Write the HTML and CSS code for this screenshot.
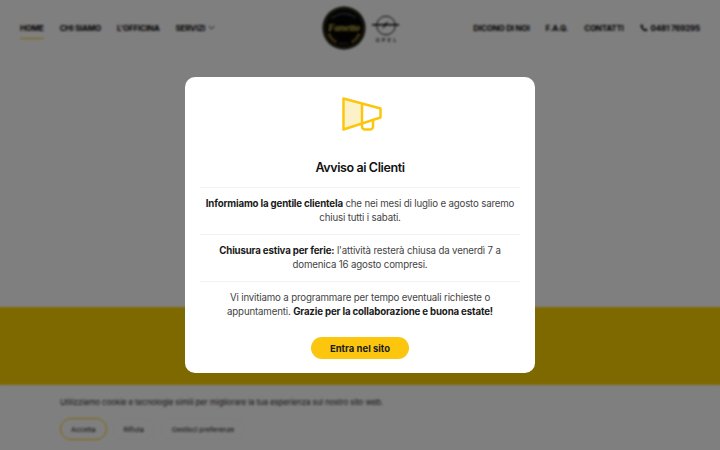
FILE: index.html
```html
<!DOCTYPE html>
<html lang="it">
<head>
    <meta charset="UTF-8">
    <title>Officina Opel</title>
    <link rel="stylesheet" href="styles.css">
</head>
<body>
    <div class="page">
        <!-- Header -->
        <header class="site-header">
            <nav class="nav-group">
                <a class="nav-link active" href="#">HOME</a>
                <a class="nav-link" href="#">CHI SIAMO</a>
                <a class="nav-link" href="#">L'OFFICINA</a>
                <a class="nav-link" href="#">SERVIZI
                    <svg class="chevron" viewBox="0 0 10 6" width="7" height="5"><path d="M1 1l4 4 4-4" fill="none" stroke="#000" stroke-width="1.2"/></svg>
                </a>
            </nav>
            <div class="logos">
                <svg class="logo-badge" viewBox="0 0 44 44" width="44" height="44">
                    <circle cx="22" cy="22" r="21.500" fill="#050505"/>
                    <circle cx="22" cy="22" r="19.500" fill="none" stroke="#8c7a30" stroke-width=".6"/>
                    <text x="22" y="25" text-anchor="middle" class="badge-text">Fanetto</text>
                    <path d="M7 28q2 5 7 8M37 28q-2 5-7 8" fill="none" stroke="#b59a2a" stroke-width="2.400" stroke-dasharray="2 1"/>
                    <path d="M10 12q12-9 24 0" fill="none" stroke="#888" stroke-width="1.400" stroke-dasharray="1 1"/>
                    <path d="M17 37.500h10" stroke="#777" stroke-width="1" stroke-dasharray="1 1"/>
                </svg>
                <div class="opel">
                    <svg viewBox="0 0 30 24" width="28" height="23">
                        <circle cx="15" cy="12" r="10" fill="none" stroke="#000" stroke-width="1"/>
                        <path d="M0 10.500h13l5-3-2.500 3H29v1.600H15l-4.500 4 2.500-4H0z" fill="#000"/>
                    </svg>
                    <span class="opel-text">OPEL</span>
                </div>
            </div>
            <nav class="nav-group">
                <a class="nav-link" href="#">DICONO DI NOI</a>
                <a class="nav-link" href="#">F.A.Q.</a>
                <a class="nav-link" href="#">CONTATTI</a>
                <a class="nav-link phone" href="#">
                    <svg viewBox="0 0 24 24" width="8" height="8"><path d="M6 1l4 5-2.500 3c1 3 4 6 7 7l3-2.500 5 4-3 4.500C10 22 2 13 1.500 4z" fill="#000"/></svg>
                    0481 769295
                </a>
            </nav>
        </header>

        <section class="hero"></section>
        <section class="band"></section>

        <!-- Cookie bar -->
        <section class="cookie-bar">
            <p>Utilizziamo cookie e tecnologie simili per migliorare la tua esperienza sul nostro sito web.</p>
            <div class="cookie-actions">
                <button class="cookie-btn accept">Accetta</button>
                <button class="cookie-btn">Rifiuta</button>
                <button class="cookie-btn">Gestisci preferenze</button>
            </div>
        </section>
    </div>

    <!-- Popup -->
    <div class="overlay">
        <div class="modal">
            <svg class="modal-icon" viewBox="0 0 40 34" width="40" height="34">
                <path d="M1.500 1.500L20 6.500v21L1.500 32.500z" fill="#fdf1c7"/>
                <path d="M1.500 1.500L38.500 11.500v9L1.500 32.500zM20 6.500v21M20 27v2.500a3 3 0 0 0 3 3h5a3 3 0 0 0 3-3V23" fill="none" stroke="#fcc60e" stroke-width="2.500" stroke-linejoin="round"/>
            </svg>
            <h2>Avviso ai Clienti</h2>
            <div class="modal-text">
                <p><strong>Informiamo la gentile clientela</strong> che nei mesi di luglio e agosto saremo chiusi tutti i sabati.</p>
                <p><strong>Chiusura estiva per ferie:</strong> l'attività resterà chiusa da venerdì 7 a domenica 16 agosto compresi.</p>
                <p>Vi invitiamo a programmare per tempo eventuali richieste o appuntamenti. <strong>Grazie per la collaborazione e buona estate!</strong></p>
            </div>
            <button class="enter-btn">Entra nel sito</button>
        </div>
    </div>
</body>
</html>
```

FILE: styles.css
```css
* {
    margin: 0;
    padding: 0;
    box-sizing: border-box;
    font-family: "Inter", "Liberation Sans", sans-serif;
}

html, body {
    height: 100%;
    overflow: hidden;
}

.page {
    height: 100vh;
    display: flex;
    flex-direction: column;
    background: #fff;
}

/* Header */
.site-header {
    height: 56px;
    padding: 0 20px;
    display: flex;
    align-items: center;
    justify-content: space-between;
}

.nav-group {
    display: flex;
    gap: 16px;
    width: 240px;
}

.nav-group:last-child {
    justify-content: flex-end;
}

.nav-link {
    color: #000;
    font-size: 8px;
    font-weight: 700;
    letter-spacing: -0.2px;
    text-decoration: none;
    white-space: nowrap;
    padding: 5px 0;
    display: flex;
    align-items: center;
    gap: 3px;
    border-bottom: 1px solid transparent;
}

.nav-link.active {
    border-bottom-color: #fcc60e;
}

.logos {
    display: flex;
    align-items: center;
    gap: 6px;
    margin-left: 2px;
}

.badge-text {
    font-size: 10px;
    font-style: italic;
    font-weight: 700;
    fill: #d8c04a;
    font-family: "Liberation Serif", serif;
}

.opel {
    display: flex;
    flex-direction: column;
    align-items: center;
}

.opel-text {
    font-size: 5px;
    font-weight: 600;
    letter-spacing: 2.500px;
    margin-right: -2.500px;
}

.hero {
    flex: 1;
}

.band {
    height: 78px;
    background: #fdd000;
    flex-shrink: 0;
}

/* Cookie bar */
.cookie-bar {
    height: 65px;
    flex-shrink: 0;
    padding: 11px 60px 0;
}

.cookie-bar p {
    font-size: 8px;
    letter-spacing: -0.14px;
    color: #333;
    line-height: 12px;
}

.cookie-actions {
    display: flex;
    margin-top: 10px;
    gap: 6px;
}

.cookie-btn {
    height: 22px;
    padding: 0 10px;
    font-size: 6.800px;
    font-weight: 400;
    color: #111;
    background: #fff;
    border: 1px solid #f6f6f6;
    border-radius: 11px;
}

.cookie-btn.accept {
    border-color: #fcc60e;
}

/* Popup */
.overlay {
    position: fixed;
    inset: 0;
    background: rgba(0, 0, 0, 0.5);
    backdrop-filter: blur(1px);
    display: flex;
    justify-content: center;
    padding-top: 77px;
}

.modal {
    width: 350px;
    height: 296px;
    padding: 20px 15px 0;
    background: #fff;
    border-radius: 10px;
    display: flex;
    flex-direction: column;
    align-items: center;
    text-align: center;
}

.modal-icon {
    display: block;
    margin-left: 3px;
}

.modal h2 {
    margin-top: 29px;
    font-size: 12.500px;
    letter-spacing: -0.4px;
    line-height: 16px;
    font-weight: 600;
    color: #111;
}

.modal-text {
    margin-top: 11px;
    width: 100%;
}

.modal-text p {
    border-top: 1px solid #f2f2f2;
    height: 47px;
    padding: 9px 0 0;
    font-size: 9.700px;
    letter-spacing: -0.16px;
    line-height: 14px;
    color: #444;
}

.modal-text strong {
    color: #1a1a1a;
    font-weight: 700;
}

.enter-btn {
    margin-top: 9px;
    width: 98px;
    height: 22px;
    border: none;
    border-radius: 11px;
    background: #fcc60e;
    color: #1a1a1a;
    font-size: 9.500px;
    font-weight: 700;
}
```
